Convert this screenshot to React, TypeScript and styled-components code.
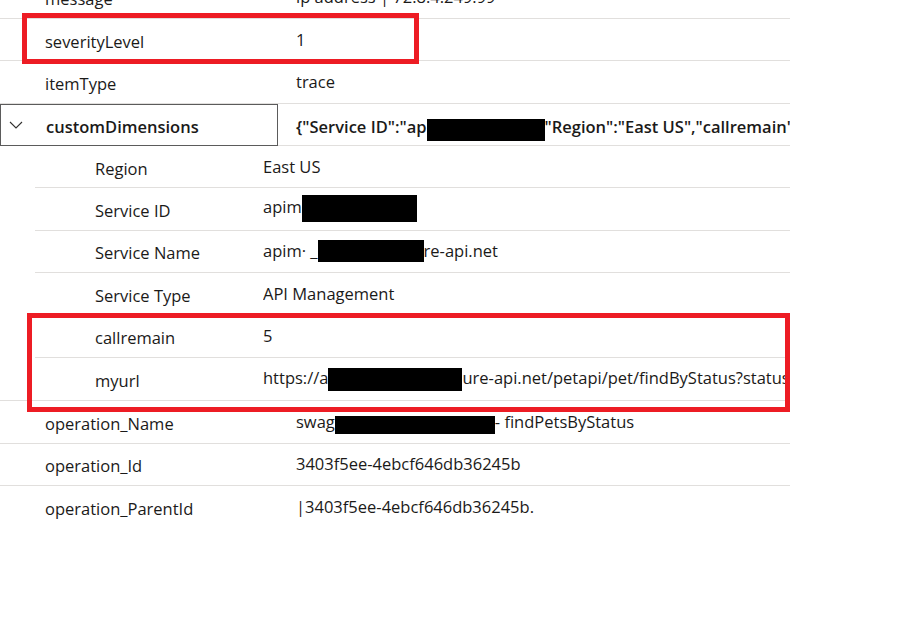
import React from 'react';
import styled, { createGlobalStyle } from 'styled-components';

const GlobalStyle = createGlobalStyle`
  html, body {
    margin: 0;
    padding: 0;
    background: #ffffff;
    overflow: hidden;
  }
  body {
    font-family: "Open Sans", "Noto Sans", "Liberation Sans", sans-serif;
    color: #1b1a19;
  }
`;

const Page = styled.div`
  position: relative;
  width: 900px;
  height: 623px;
  overflow: hidden;
`;

const Table = styled.div`
  width: 790px;
  margin-top: -23.4px;
  display: flex;
  flex-direction: column;
`;

const Row = styled.div<{ $focused?: boolean }>`
  display: grid;
  grid-template-columns: 278px 1fr;
  height: 42.36px;
  box-sizing: border-box;
  border-bottom: 1px solid #e1dfdd;
  align-items: center;
  font-weight: ${(p) => (p.$focused ? 600 : 400)};

  &:last-child {
    border-bottom: none;
  }
`;

const NameCell = styled.div<{ $focused?: boolean }>`
  position: relative;
  box-sizing: border-box;
  display: flex;
  align-items: center;
  padding: 3px 0 0 45px;
  font-size: 16.5px;
  white-space: nowrap;
  border: ${(p) => (p.$focused ? '1px solid #5b5b5b' : 'none')};
  margin-bottom: ${(p) => (p.$focused ? '-1px' : '0')};
  height: ${(p) => (p.$focused ? 'calc(100% + 1px)' : '100%')};
`;

const Chevron = styled.svg`
  position: absolute;
  left: 8px;
  top: 50%;
  margin-top: -4px;
  width: 14px;
  height: 8px;
`;

const ValueCell = styled.div<{ $indent: number; $drop?: number }>`
  padding: ${(p) => p.$drop ?? 0}px 0 1px ${(p) => p.$indent}px;
  font-size: 16.5px;
  white-space: nowrap;
  overflow: hidden;
`;

const Group = styled.div`
  border-bottom: 1px solid #e1dfdd;
`;

const SubRow = styled.div`
  display: grid;
  grid-template-columns: 228px 1fr;
  height: 42.36px;
  margin-left: 35px;
  box-sizing: border-box;
  align-items: center;
  border-bottom: 1px solid #e1dfdd;

  &:last-child {
    border-bottom: none;
  }
`;

const SubName = styled.div`
  padding: 3px 0 0 60px;
  font-size: 16.5px;
  white-space: nowrap;
`;

const Redact = styled.span<{ $w: number; $h: number; $dy?: number }>`
  display: inline-block;
  width: ${(p) => p.$w}px;
  height: ${(p) => p.$h}px;
  background: #000000;
  vertical-align: middle;
  position: relative;
  top: ${(p) => p.$dy ?? 0}px;
`;

const Highlight = styled.div<{ $x: number; $y: number; $w: number; $h: number }>`
  position: absolute;
  left: ${(p) => p.$x}px;
  top: ${(p) => p.$y}px;
  width: ${(p) => p.$w}px;
  height: ${(p) => p.$h}px;
  box-sizing: border-box;
  border: 5px solid #ed1c24;
  pointer-events: none;
`;

type Part = string | { w: number; h: number; dy?: number };

type Item = { name: string; value: Part[] };

const before: Item[] = [
  { name: 'message', value: ['ip address | 72.8.4.249.99'] },
  { name: 'severityLevel', value: ['1'] },
  { name: 'itemType', value: ['trace'] },
];

const custom: Item[] = [
  { name: 'Region', value: ['East US'] },
  { name: 'Service ID', value: ['apim', { w: 115, h: 27 }] },
  { name: 'Service Name', value: ['apim· _', { w: 106, h: 22, dy: -1 }, 're-api.net'] },
  { name: 'Service Type', value: ['API Management'] },
  { name: 'callremain', value: ['5'] },
  {
    name: 'myurl',
    value: ['https://a', { w: 134, h: 23 }, 'ure-api.net/petapi/pet/findByStatus?status=available'],
  },
];

const after: Item[] = [
  { name: 'operation_Name', value: ['swag', { w: 160, h: 19, dy: 2 }, '- findPetsByStatus'] },
  { name: 'operation_Id', value: ['3403f5ee-4ebcf646db36245b'] },
  { name: 'operation_ParentId', value: ['|3403f5ee-4ebcf646db36245b.'] },
];

function renderValue(parts: Part[]) {
  return parts.map((p, i) =>
    typeof p === 'string' ? <span key={i}>{p}</span> : <Redact key={i} $w={p.w} $h={p.h} $dy={p.dy} />
  );
}

function TopRow({ item }: { item: Item }) {
  return (
    <Row>
      <NameCell>{item.name}</NameCell>
      <ValueCell $indent={18}>{renderValue(item.value)}</ValueCell>
    </Row>
  );
}

export default function App() {
  return (
    <Page>
      <GlobalStyle />
      <Table>
        {before.map((item) => (
          <TopRow key={item.name} item={item} />
        ))}
        <Row $focused>
          <NameCell $focused>
            <Chevron viewBox="0 0 14 8">
              <polyline points="1,1 7,7 13,1" fill="none" stroke="#323130" strokeWidth="1.1" />
            </Chevron>
            customDimensions
          </NameCell>
          <ValueCell $indent={18} $drop={7}>
            {'{"Service ID":"ap'}
            <Redact $w={118} $h={22} $dy={1} />
            {'"Region":"East US","callremain":"5","myurl":"https://a'}
          </ValueCell>
        </Row>
        <Group>
          {custom.map((item) => (
            <SubRow key={item.name}>
              <SubName>{item.name}</SubName>
              <ValueCell $indent={0}>{renderValue(item.value)}</ValueCell>
            </SubRow>
          ))}
        </Group>
        {after.map((item) => (
          <TopRow key={item.name} item={item} />
        ))}
      </Table>
      <Highlight $x={22} $y={13} $w={397} $h={51} />
      <Highlight $x={27} $y={313} $w={763} $h={99} />
    </Page>
  );
}
